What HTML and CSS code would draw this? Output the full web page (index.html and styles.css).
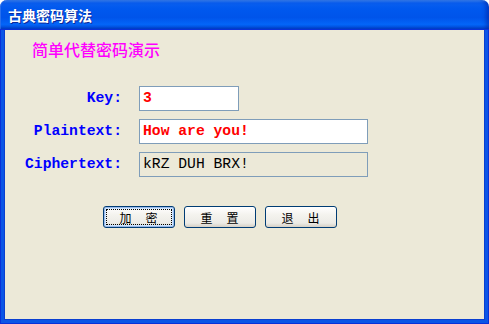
FILE: index.html
```html
<!DOCTYPE html>
<html lang="zh">
<head>
  <meta charset="UTF-8">
  <title>古典密码算法</title>
  <link rel="stylesheet" href="styles.css">
</head>
<body>
  <div class="window">
    <div class="titlebar">
      <span class="title-text">古典密码算法</span>
    </div>
    <div class="client">
      <h1 class="heading">简单代替密码演示</h1>
      <div class="form">
        <label class="field-label">Key:</label>
        <div class="field-box field-key">3</div>
        <label class="field-label">Plaintext:</label>
        <div class="field-box field-plain">How are you!</div>
        <label class="field-label">Ciphertext:</label>
        <div class="field-box field-cipher">kRZ DUH BRX!</div>
      </div>
      <div class="buttons">
        <button class="xp-button focused">加　密</button>
        <button class="xp-button">重　置</button>
        <button class="xp-button">退　出</button>
      </div>
    </div>
  </div>
</body>
</html>
```

FILE: styles.css
```css
body {
  margin: 0;
  background: #ffffff;
  font-family: "Noto Sans CJK SC", "DejaVu Sans", sans-serif;
}
.window {
  width: 489px;
  height: 324px;
  display: flex;
  flex-direction: column;
  box-sizing: border-box;
}
.titlebar {
  height: 29px;
  flex: none;
  border-radius: 7px 7px 0 0;
  background: linear-gradient(to bottom, #3d8ffb 0%, #0a5fef 10%, #0058ee 30%, #0054ea 60%, #0466f9 85%, #0046d2 100%);
  box-shadow: inset -3px 0 4px rgba(0, 20, 140, 0.45), inset 1px 0 0 #2a73f0;
  display: flex;
  align-items: center;
  padding-left: 8px;
  box-sizing: border-box;
}
.title-text {
  color: #ffffff;
  font-size: 14px;
  font-weight: bold;
  text-shadow: 1px 1px 0 #0a2a9a;
  line-height: 16px;
  margin-top: 1px;
}
.client {
  flex: 1;
  background: #ece9d8;
  border: 4px solid #0b55e6;
  border-top: none;
  box-shadow: inset 1px 0 0 #0a3fd0, inset -1px 0 0 #0a3fd0, inset 0 -1px 0 #0a3fd0;
  outline: 1px solid #0831d9;
  outline-offset: -1px;
  padding-top: 10px;
}
.heading {
  margin: 0 0 27px 28px;
  font-size: 16px;
  line-height: 20px;
  font-weight: 500;
  color: #ff00ff;
}
.form {
  display: grid;
  grid-template-columns: 118px auto;
  grid-auto-rows: 25px;
  column-gap: 17px;
  row-gap: 8px;
  font-family: "Liberation Mono", "DejaVu Sans Mono", monospace;
  font-size: 14.7px;
  font-weight: bold;
}
.field-label {
  color: #0000ff;
  text-align: right;
  line-height: 25px;
}
.field-box {
  box-sizing: border-box;
  border: 1px solid #7f9db9;
  background: #ffffff;
  padding: 0 3px;
  line-height: 23px;
  width: 229px;
}
.field-key {
  width: 100px;
  color: #ff0000;
}
.field-plain {
  color: #ff0000;
}
.field-cipher {
  background: #ece9d8;
  color: #000000;
  font-weight: normal;
}
.buttons {
  display: flex;
  gap: 9px;
  margin: 29px 0 0 99px;
}
.xp-button {
  width: 72px;
  height: 22px;
  padding: 0;
  border: 1px solid #003c74;
  border-radius: 3px;
  background: linear-gradient(to bottom, #ffffff 0%, #f4f3ee 40%, #ecebe6 80%, #d6d0c5 100%);
  font-family: "Noto Sans CJK SC", sans-serif;
  font-size: 12px;
  color: #000000;
  letter-spacing: 1px;
}
.xp-button.focused {
  box-shadow: inset 0 0 0 1px #9ab9ea, inset 0 0 0 2px #cee7ff;
  outline: 1px dotted #000000;
  outline-offset: -4px;
}
```
